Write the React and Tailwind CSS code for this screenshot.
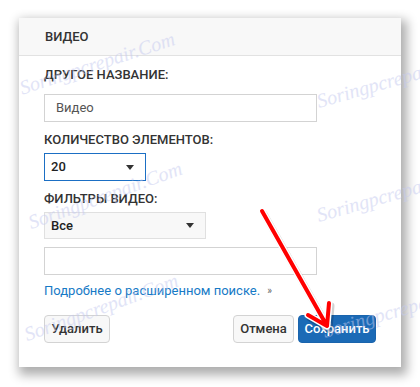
import React from 'react'

const font = { fontFamily: 'Roboto, "Liberation Sans", Arial, sans-serif' }

const marks = [
  { left: 16, top: 48, rot: '-rotate-[18deg]' },
  { left: 24, top: 180, rot: '-rotate-[20deg]' },
  { left: 20, top: 292, rot: '-rotate-[20deg]' },
  { left: 314, top: 64, rot: '-rotate-[16deg]' },
  { left: 314, top: 178, rot: '-rotate-[16deg]' },
  { left: 320, top: 294, rot: '-rotate-[16deg]' },
]

function Caret() {
  return <span className="h-0 w-0 border-x-[4px] border-t-[5px] border-x-transparent border-t-[#333]" />
}

function Label({ children, className = '' }) {
  return (
    <div className={`text-[13px] leading-4 font-medium uppercase text-[#333] ${className}`}>{children}</div>
  )
}

export default function App() {
  return (
    <div className="relative h-[387px] w-[420px] overflow-hidden bg-white" style={font}>
      <div className="ml-[19px] mt-[18px] flex h-[349px] w-[382px] flex-col bg-white shadow-[3px_5px_10px_3px_rgba(0,0,0,0.32)]">
        <div className="flex h-[38px] items-center border-b border-[#e2e2e2] bg-[#f8f8f8] pl-[26px] text-[13px] font-medium text-[#333]">
          ВИДЕО
        </div>
        <div className="flex flex-1 flex-col pl-[25px] pr-[25px]">
          <Label className="mt-[11px]">Другое название:</Label>
          <div className="mt-[11px] flex h-[28px] w-[273px] items-center border border-[#d3d3d3] pl-[11px] text-[13px] text-[#555]">
            Видео
          </div>
          <Label className="mt-[10px]">Количество элементов:</Label>
          <div className="mt-[5px] flex h-[28px] w-[102px] items-center justify-between border border-[#1b6fc4] pl-[6px] pr-[11px] text-[13px] font-medium text-[#222]">
            20
            <Caret />
          </div>
          <Label className="mt-[10px]">Фильтры видео:</Label>
          <div className="mt-[5px] flex h-[27px] w-[162px] items-center justify-between border border-[#e0e0e0] bg-[#f8f8f8] pl-[6px] pr-[11px] text-[13px] font-medium text-[#222]">
            Все
            <Caret />
          </div>
          <div className="mt-[8px] h-[28px] w-[273px] border border-[#d3d3d3]" />
          <div className="mt-[8px] flex items-center text-[13px] leading-4">
            <span className="text-[#167ac6]">Подробнее о расширенном поиске.</span>
            <span className="ml-[7px] text-[10px] text-[#666]">»</span>
          </div>
          <div className="mt-[16px] flex items-center">
            <button className="h-[28px] w-[66px] rounded-sm border border-[#d3d3d3] bg-[#f8f8f8] text-[13px] font-medium text-[#333]">
              Удалить
            </button>
            <button className="ml-auto h-[28px] w-[61px] rounded-sm border border-[#d3d3d3] bg-[#f8f8f8] text-[13px] font-medium text-[#333]">
              Отмена
            </button>
            <button className="ml-[4px] h-[28px] w-[78px] rounded-sm border border-[#1a64ad] bg-[#1b6ab6] text-[13px] font-medium text-white">
              Сохранить
            </button>
          </div>
        </div>
      </div>

      {/* watermark */}
      {marks.map((m, i) => (
        <div
          key={i}
          className={`pointer-events-none absolute whitespace-nowrap text-[20px] italic text-[#c5caf0] opacity-50 ${m.rot}`}
          style={{ left: m.left, top: m.top, fontFamily: '"Liberation Serif", serif' }}
        >
          Soringpcrepair.Com
        </div>
      ))}

      <svg className="pointer-events-none absolute left-0 top-0" width="420" height="387" viewBox="0 0 420 387">
        <g strokeLinecap="round" strokeLinejoin="round" fill="none">
          <path d="M264 214 L329 329 M310 318 L329 329 L331 306" stroke="rgba(0,0,0,0.18)" strokeWidth="7" />
          <path d="M262 211 L327 326 M308 315 L327 326 L329 303" stroke="#fff" strokeWidth="7" />
          <path d="M262 211 L327 326 M308 315 L327 326 L329 303" stroke="#f00" strokeWidth="4" />
        </g>
      </svg>
    </div>
  )
}
